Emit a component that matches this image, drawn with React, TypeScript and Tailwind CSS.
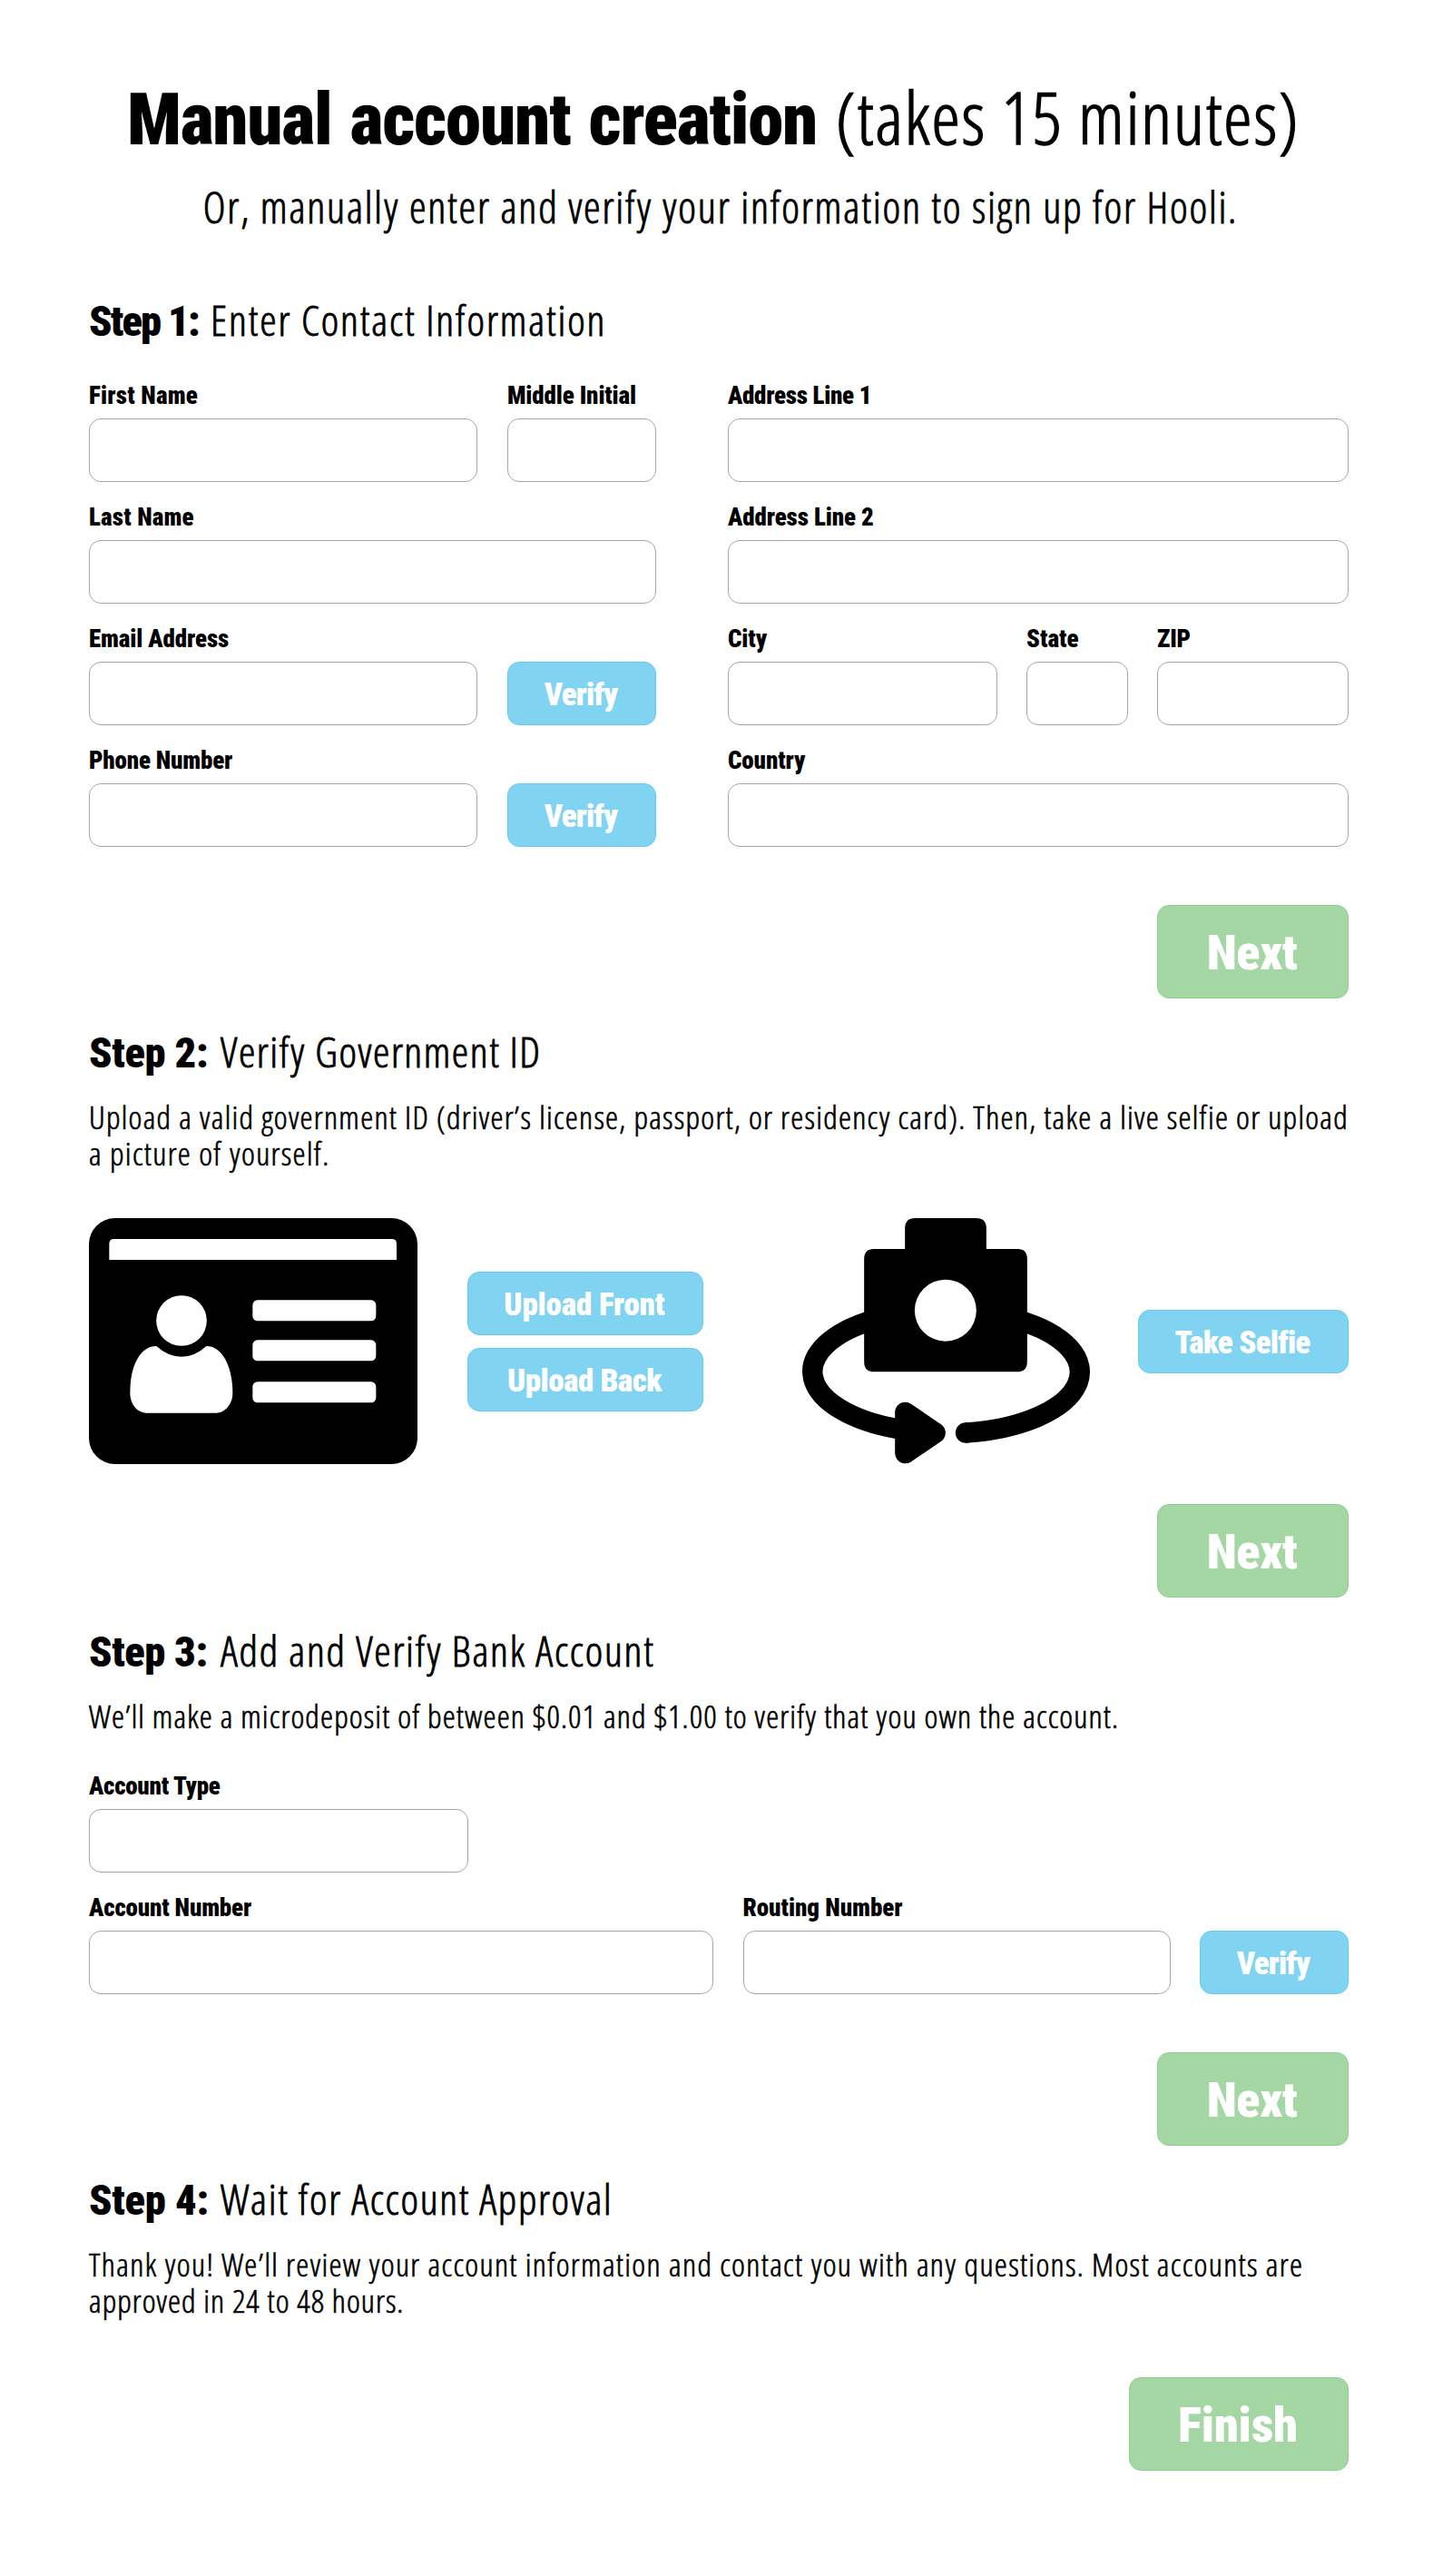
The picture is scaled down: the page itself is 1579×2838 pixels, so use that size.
import React from 'react';

const light = "font-['Open_Sans',sans-serif] font-stretch-condensed font-light whitespace-nowrap [-webkit-text-stroke:0.018em_currentColor]";
const heavy = "font-['Roboto',sans-serif] font-stretch-condensed font-black whitespace-nowrap";

function StepHeading({ step, stepClass, title, titleClass }: { step: string; stepClass: string; title: string; titleClass: string }) {
  return (
    <h2 className="flex h-14 items-baseline text-[46.5px]">
      <span className={`${heavy} leading-none ${stepClass}`}>{step}</span>
      <span className={`${light} leading-[56px] ${titleClass}`}>{title}</span>
    </h2>
  );
}

function Field({ label, width, tracking = '' }: { label: string; width: string; tracking?: string }) {
  return (
    <label className={`block shrink-0 ${width}`}>
      <span className={`${heavy} mb-[9px] block text-[27px] leading-8 ${tracking}`}>{label}</span>
      <input type="text" className="block h-[70px] w-full rounded-[13px] border border-[#a6a6a6] bg-white px-4 text-2xl outline-none" />
    </label>
  );
}

function ActionButton({ label, width, tracking = '' }: { label: string; width: string; tracking?: string }) {
  return (
    <button className={`${heavy} flex h-[70px] shrink-0 items-center justify-center rounded-[13px] border border-[#62cbf1] bg-[#80d4f2] pt-[3px] pr-0.5 text-[35px] leading-none text-white ${width} ${tracking}`}>
      {label}
    </button>
  );
}

function NextButton({ label = 'Next', width = 'w-[211px]', tracking = 'tracking-[-0.008em]' }: { label?: string; width?: string; tracking?: string }) {
  return (
    <button className={`${heavy} ml-auto flex h-[103px] items-center justify-center rounded-[13px] border border-[#8dce8f] bg-[#a5d7a5] pt-[3px] pr-0.5 text-[54.4px] leading-none text-white ${width} ${tracking}`}>
      {label}
    </button>
  );
}

function IdCardIcon() {
  return (
    <svg viewBox="14 20 1086 813" className="h-[271px] w-[362px] shrink-0">
      <rect x="14" y="20" width="1086" height="813" rx="86" />
      <g fill="white">
        <path d="M81 158V105Q81 89 97 89H1015Q1031 89 1031 105V158Z" />
        <circle cx="320" cy="359" r="83.5" />
        <path d="M237 443C182 443 150 510 150 598C150 636 175 664 207 664H435C465 664 489 634 489 598C489 510 455 443 402 443Q365 478 320 478Q275 478 237 443Z" />
        <rect x="555" y="291" width="408" height="69" rx="16" />
        <rect x="555" y="423" width="408" height="69" rx="16" />
        <rect x="555" y="561" width="408" height="69" rx="16" />
      </g>
    </svg>
  );
}

function CameraIcon() {
  return (
    <svg viewBox="24 20 947 813" className="h-[271px] w-[316px] shrink-0 overflow-visible">
      <path
        fillRule="evenodd"
        d="M363 54Q363 20 397 20H598Q632 20 632 54V122H735Q767 122 767 156V494Q767 528 735 528H260Q228 528 228 494V156Q228 122 260 122H363ZM497 223A102 102 0 1 0 497 427A102 102 0 1 0 497 223Z"
      />
      <g fill="none" stroke="black" strokeWidth="67">
        <path d="M260 356A438 203 0 0 0 340 717" />
        <path d="M734 356A438 203 0 0 1 564 729.500" />
      </g>
      <circle cx="564" cy="729.500" r="34" />
      <path d="M364 662L463 730L364 797Z" stroke="black" strokeWidth="68" strokeLinejoin="round" />
    </svg>
  );
}

export default function App() {
  return (
    <main className="h-[2838px] w-[1579px] overflow-hidden bg-white pt-[89px] pr-[93px] pl-[98px] text-black">
      <h1 className="flex h-20 items-baseline pl-[42px] text-[79px]">
        <span className={`${heavy} leading-none tracking-[-0.0155em] [word-spacing:0.04em]`}>Manual account creation</span>
        <span className={`${light} ml-[21px] leading-[80px] tracking-[0.024em]`}>(takes 15 minutes)</span>
      </h1>
      <p className="mt-[31px] flex h-14 justify-center pl-1 text-[47px] leading-[56px]">
        <span className={`${light} tracking-[0.0385em]`}>Or, manually enter and verify your information to sign up for Hooli.</span>
      </p>

      <section className="mt-[68px]">
        <StepHeading step="Step 1:" stepClass="w-[134px] tracking-[-0.04em]" title="Enter Contact Information" titleClass="tracking-[0.041em]" />
        <div className="mt-10 flex gap-[79px]">
          <div className="flex w-[625px] flex-col gap-[23px]">
            <div className="flex justify-between">
              <Field label="First Name" width="w-[428px]" tracking="tracking-[0.0074em]" />
              <Field label="Middle Initial" width="w-[164px]" tracking="tracking-[-0.0048em]" />
            </div>
            <Field label="Last Name" width="w-full" tracking="tracking-[0.0059em]" />
            <div className="flex items-end justify-between">
              <Field label="Email Address" width="w-[428px]" tracking="tracking-[-0.0043em]" />
              <ActionButton label="Verify" width="w-[164px]" tracking="tracking-[-0.025em]" />
            </div>
            <div className="flex items-end justify-between">
              <Field label="Phone Number" width="w-[428px]" tracking="tracking-[-0.007em]" />
              <ActionButton label="Verify" width="w-[164px]" tracking="tracking-[-0.025em]" />
            </div>
          </div>
          <div className="flex w-[684px] flex-col gap-[23px]">
            <Field label="Address Line 1" width="w-full" tracking="tracking-[-0.0108em]" />
            <Field label="Address Line 2" width="w-full" tracking="tracking-[-0.0043em]" />
            <div className="flex justify-between">
              <Field label="City" width="w-[297px]" tracking="tracking-[-0.003em]" />
              <Field label="State" width="w-[112px]" tracking="tracking-[0.0024em]" />
              <Field label="ZIP" width="w-[211px]" tracking="tracking-[-0.01em]" />
            </div>
            <Field label="Country" width="w-full" tracking="tracking-[-0.0036em]" />
          </div>
        </div>
        <div className="mt-16">
          <NextButton />
        </div>
      </section>

      <section className="mt-[30px]">
        <StepHeading step="Step 2:" stepClass="w-[145px] tracking-[-0.0076em]" title="Verify Government ID" titleClass="tracking-[0.0335em]" />
        <p className={`${light} mt-6 flex flex-col text-[35.4px] leading-10`}>
          <span className="tracking-[0.0365em]">Upload a valid government ID (driver’s license, passport, or residency card). Then, take a live selfie or upload</span>
          <span className="tracking-[0.0385em]">a picture of yourself.</span>
        </p>
        <div className="mt-[52px] flex items-center">
          <IdCardIcon />
          <div className="ml-[55px] flex flex-col gap-3.5">
            <ActionButton label="Upload Front" width="w-[260px]" tracking="tracking-[-0.0038em]" />
            <ActionButton label="Upload Back" width="w-[260px]" tracking="tracking-[-0.0129em]" />
          </div>
          <div className="ml-auto flex items-center gap-[54px]">
            <CameraIcon />
            <ActionButton label="Take Selfie" width="w-[232px]" tracking="tracking-[-0.023em]" />
          </div>
        </div>
        <div className="mt-11">
          <NextButton />
        </div>
      </section>

      <section className="mt-[30px]">
        <StepHeading step="Step 3:" stepClass="w-[145px] tracking-[-0.0097em]" title="Add and Verify Bank Account" titleClass="tracking-[0.038em]" />
        <p className={`${light} mt-6 text-[35.4px] leading-10 tracking-[0.0326em]`}>
          We’ll make a microdeposit of between $0.01 and $1.00 to verify that you own the account.
        </p>
        <div className="mt-[42px] flex flex-col gap-[23px]">
          <Field label="Account Type" width="w-[418px]" tracking="tracking-[-0.0100em]" />
          <div className="flex items-end justify-between">
            <Field label="Account Number" width="w-[688px]" tracking="tracking-[-0.006em]" />
            <Field label="Routing Number" width="w-[471px]" tracking="tracking-[-0.0005em]" />
            <ActionButton label="Verify" width="w-[164px]" tracking="tracking-[-0.025em]" />
          </div>
        </div>
        <div className="mt-16">
          <NextButton />
        </div>
      </section>

      <section className="mt-[30px]">
        <StepHeading step="Step 4:" stepClass="w-[145px] tracking-[-0.0061em]" title="Wait for Account Approval" titleClass="tracking-[0.0365em]" />
        <p className={`${light} mt-6 flex flex-col text-[35.4px] leading-10`}>
          <span className="tracking-[0.0384em]">Thank you! We’ll review your account information and contact you with any questions. Most accounts are</span>
          <span className="tracking-[0.03em]">approved in 24 to 48 hours.</span>
        </p>
        <div className="mt-[65px]">
          <NextButton label="Finish" width="w-[242px]" tracking="tracking-[-0.0033em]" />
        </div>
      </section>
    </main>
  );
}
